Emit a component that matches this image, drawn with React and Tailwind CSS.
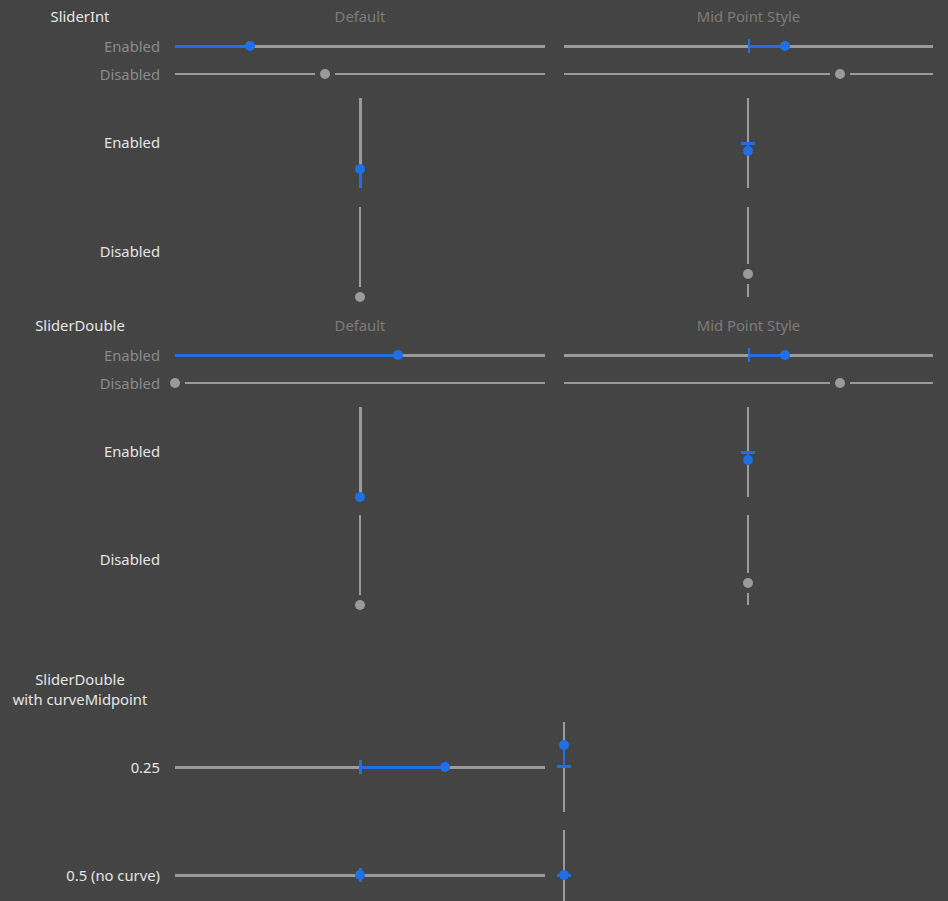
import React from 'react';

const BLUE = '#1f6fe6';
const GRAY = '#9a9a9a';

// horizontal slider, drawn in a 28px tall row; pos / mid are px from the left end
const HSlider = ({ len, pos, mid, on = true, thick = 3, tick = 2 }) => {
  const t = on ? thick : 2;
  const top = Math.round((28 - t) / 2);
  const seg = (a, b, color, key) =>
    b > a ? (
      <div key={key} className="absolute" style={{ left: a, width: b - a, top, height: t, background: color }} />
    ) : null;

  let parts = [];
  if (on) {
    parts.push(seg(0, len, GRAY, 'g'));
    const start = mid ?? 0;
    parts.push(seg(Math.min(start, pos), Math.max(start, pos), BLUE, 'b'));
    if (mid != null) {
      parts.push(
        <div key="tick" className="absolute top-[7px] h-[14px]" style={{ left: mid - Math.floor(tick / 2), width: tick, background: BLUE }} />
      );
    }
  } else {
    parts.push(seg(0, pos - 10, GRAY, 'g1'));
    parts.push(seg(pos + 10, len, GRAY, 'g2'));
  }

  return (
    <div className="relative h-[28px] w-full">
      {parts}
      <div
        className="absolute top-[9px] h-[10px] w-[10px] rounded-full"
        style={{ left: pos - 5, background: on ? BLUE : GRAY }}
      />
    </div>
  );
};

// vertical slider in a 16px wide, 90px tall box; pos / mid are px from the top
const VSlider = ({ pos, mid, on = true, thick = 3 }) => {
  const len = 90;
  const t = on ? thick : 2;
  const left = Math.round((16 - t) / 2);
  const seg = (a, b, color, key) =>
    b > a ? (
      <div key={key} className="absolute" style={{ top: a, height: b - a, left, width: t, background: color }} />
    ) : null;

  let parts = [];
  if (on) {
    parts.push(seg(0, len, GRAY, 'g'));
    if (mid != null) {
      parts.push(seg(Math.min(mid, pos), Math.max(mid, pos), BLUE, 'b'));
      parts.push(
        <div key="tick" className="absolute left-[1px] h-[3px] w-[14px]" style={{ top: mid - 1, background: BLUE }} />
      );
    } else {
      parts.push(seg(pos, len, BLUE, 'b'));
    }
  } else {
    parts.push(seg(0, pos - 10, GRAY, 'g1'));
    parts.push(seg(pos + 10, len, GRAY, 'g2'));
  }

  return (
    <div className="relative h-[90px] w-[16px] shrink-0">
      {parts}
      <div
        className="absolute left-[3px] h-[10px] w-[10px] rounded-full"
        style={{ top: pos - 5, background: on ? BLUE : GRAY }}
      />
    </div>
  );
};

const HRow = ({ label, left, right }) => (
  <div className="flex h-[28px] items-center">
    <div className="w-[160px] text-right text-[#8a8a8a]">{label}</div>
    <div className="ml-[15px] w-[370px]">{left}</div>
    <div className="ml-[19px] w-[369px]">{right}</div>
  </div>
);

const VRow = ({ label, left, right, className }) => (
  <div className={`flex h-[90px] items-center ${className}`}>
    <div className="-mt-[2px] w-[160px] text-right text-[#e4e4e4]">{label}</div>
    <div className="ml-[15px] flex w-[370px] justify-center">{left}</div>
    <div className="ml-[18px] flex w-[369px] justify-center">{right}</div>
  </div>
);

const Section = ({ title, children }) => (
  <div className="flex flex-col pb-[12px]">
    <div className="flex h-[32px] items-center">
      <div className="w-[160px] text-center text-[#e6e6e6]">{title}</div>
      <div className="ml-[15px] w-[370px] text-center text-[#7c7c7c]">Default</div>
      <div className="ml-[19px] w-[369px] text-center text-[#7c7c7c]">Mid Point Style</div>
    </div>
    {children}
  </div>
);

const CurveRow = ({ label, h, v, className }) => (
  <div className={`flex h-[90px] items-center ${className}`}>
    <div className="-mt-[1px] w-[160px] text-right text-[#e4e4e4]">{label}</div>
    <div className="ml-[15px] w-[370px]">{h}</div>
    <div className="ml-[11px]">{v}</div>
  </div>
);

export default function App() {
  return (
    <div className="h-[901px] w-[948px] overflow-hidden bg-[#444444] font-['Noto_Sans',sans-serif] text-[14.8px] leading-[20px]">
      <Section title="SliderInt">
        <HRow
          label="Enabled"
          left={<HSlider len={370} pos={75} />}
          right={<HSlider len={369} pos={221} mid={185} />}
        />
        <HRow
          label="Disabled"
          left={<HSlider len={370} pos={150} on={false} />}
          right={<HSlider len={369} pos={276} on={false} />}
        />
        <VRow
          label="Enabled"
          className="mt-[10px]"
          left={<VSlider pos={71} />}
          right={<VSlider pos={53} mid={45} thick={2} />}
        />
        <VRow
          label="Disabled"
          className="mt-[19px]"
          left={<VSlider pos={90} on={false} />}
          right={<VSlider pos={67} on={false} />}
        />
      </Section>

      <Section title="SliderDouble">
        <HRow
          label="Enabled"
          left={<HSlider len={370} pos={223} />}
          right={<HSlider len={369} pos={221} mid={185} />}
        />
        <HRow
          label="Disabled"
          left={<HSlider len={370} pos={0} on={false} />}
          right={<HSlider len={369} pos={276} on={false} />}
        />
        <VRow
          label="Enabled"
          className="mt-[10px]"
          left={<VSlider pos={90} />}
          right={<VSlider pos={53} mid={45} thick={2} />}
        />
        <VRow
          label="Disabled"
          className="mt-[18px]"
          left={<VSlider pos={90} on={false} />}
          right={<VSlider pos={68} on={false} />}
        />
      </Section>

      <div className="flex flex-col">
        <div className="mt-[52px] w-[160px] text-center text-[#e6e6e6]">
          <div>SliderDouble</div>
          <div>with curveMidpoint</div>
        </div>
        <CurveRow
          label="0.25"
          className="mt-[13px]"
          h={<HSlider len={370} pos={270} mid={185} tick={3} />}
          v={<VSlider pos={23} mid={44} thick={2} />}
        />
        <CurveRow
          label="0.5 (no curve)"
          className="mt-[18px]"
          h={<HSlider len={370} pos={185} mid={185} tick={3} />}
          v={<VSlider pos={45} mid={45} thick={2} />}
        />
      </div>
    </div>
  );
}
